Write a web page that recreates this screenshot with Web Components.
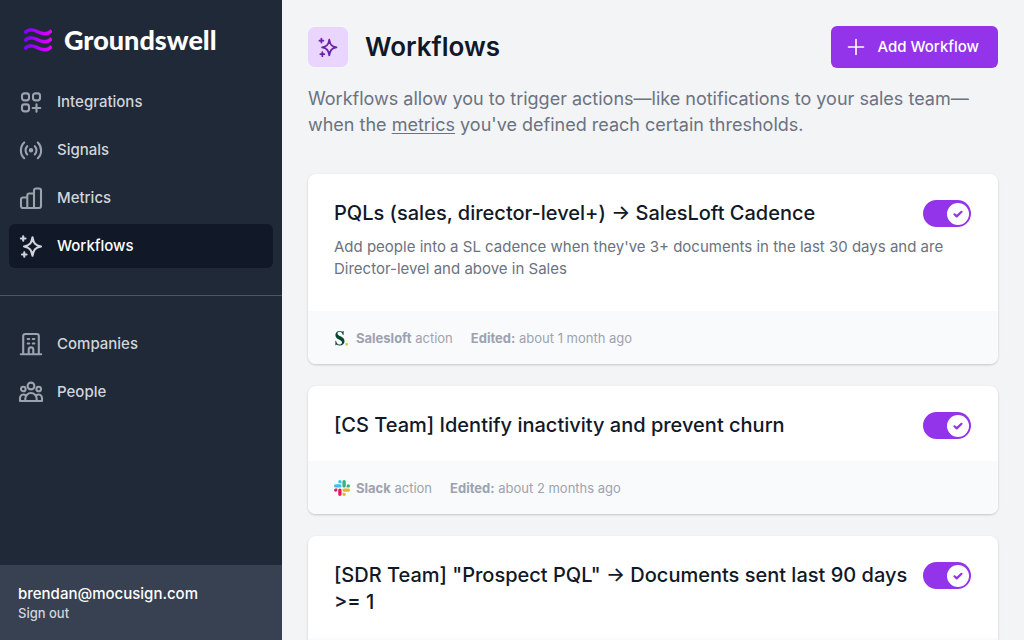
<!DOCTYPE html>
<html lang="en">
<head>
<meta charset="utf-8">
<meta name="viewport" content="width=device-width, initial-scale=1">
<title>Workflows · Groundswell</title>
<style>
  body { margin: 0; font-family: Inter, "Liberation Sans", sans-serif; color: #111827; background: #f3f4f6; }
  page-header p { margin: 0; }
  page-header p a { color: inherit; text-decoration: underline; text-underline-offset: 2px; }
</style>
</head>
<body>
<app-shell>
  <side-bar slot="sidebar">
    <nav-item icon="integrations" href="#integrations">Integrations</nav-item>
    <nav-item icon="signals" href="#signals">Signals</nav-item>
    <nav-item icon="metrics" href="#metrics">Metrics</nav-item>
    <nav-item icon="workflows" href="#workflows" active>Workflows</nav-item>
    <nav-item slot="secondary" icon="companies" href="#companies">Companies</nav-item>
    <nav-item slot="secondary" icon="people" href="#people">People</nav-item>
    <user-panel slot="user" email="brendan@mocusign.com"></user-panel>
  </side-bar>
  <page-header>
    <span slot="title">Workflows</span>
    <span slot="action">Add Workflow</span>
    <p>Workflows allow you to trigger actions—like notifications to your sales team—when the <a href="#metrics">metrics</a> you've defined reach certain thresholds.</p>
  </page-header>
  <workflow-card name="PQLs (sales, director-level+) → SalesLoft Cadence" service="Salesloft" edited="about 1 month ago">Add people into a SL cadence when they've 3+ documents in the last 30 days and are Director-level and above in Sales</workflow-card>
  <workflow-card name="[CS Team] Identify inactivity and prevent churn" service="Slack" edited="about 2 months ago"></workflow-card>
  <workflow-card name="[SDR Team] &quot;Prospect PQL&quot; → Documents sent last 90 days &gt;= 1"></workflow-card>
</app-shell>

<script>
const STAR = `<path d="M14.5 4.2C15.5 10 17 12.5 23 13.5C17 14.5 15.5 17 14.5 22.8C13.5 17 12 14.5 6 13.5C12 12.5 13.5 10 14.5 4.2Z"/><path d="M5.2 3.2V7.8M2.9 5.5H7.5M6.3 19.2V23.8M4 21.5H8.6"/>`;
const ICONS = {
  integrations: `<rect x="4" y="4.4" width="7" height="7" rx="2.4"/><rect x="15" y="4.4" width="7" height="7" rx="2.4"/><rect x="4" y="15.4" width="7" height="7" rx="2.4"/><path d="M18.5 15.2V22.8M14.7 19H22.3"/>`,
  signals: `<path d="M6.2 5.4C1.8 9.6 1.8 17.2 6.2 21.2M19.8 5.4C24.2 9.6 24.2 17.2 19.8 21.2M9.2 9.2C7 11.5 7 15.2 9.2 17.5M16.8 9.2C19 11.5 19 15.2 16.8 17.5"/><circle cx="13" cy="13.3" r="1.2" fill="currentColor"/>`,
  metrics: `<path d="M9.3 23H5A2 2 0 0 1 3 21V14.5A2 2 0 0 1 5 12.5H9.3M16 23H9.3V10.5A2 2 0 0 1 11.3 8.5H16M18 3.5H21A2 2 0 0 1 23 5.5V21A2 2 0 0 1 21 23H16V5.5A2 2 0 0 1 18 3.5Z"/>`,
  workflows: STAR,
  companies: `<path d="M2.8 23.2H23.2M5.2 23V5A2 2 0 0 1 7.2 3H18.8A2 2 0 0 1 20.8 5V23M10.7 23V18.7A2.3 2.3 0 0 1 15.3 18.7V23M9.7 8H11.2M14.8 8H16.3M9.7 12.5H11.2M14.8 12.5H16.3"/>`,
  people: `<circle cx="13" cy="7" r="3.4"/><circle cx="5.3" cy="10" r="2.3"/><circle cx="20.7" cy="10" r="2.3"/><path d="M7.3 22V19.7A5.7 5.7 0 0 1 18.7 19.7V22ZM7.3 22H2V19A3.5 3.5 0 0 1 7.3 16M18.7 22H24V19A3.5 3.5 0 0 0 18.7 16"/>`
};
const icon = name => `<svg viewBox="0 0 26 26" fill="none" stroke="currentColor" stroke-width="2.1" stroke-linecap="round" stroke-linejoin="round" aria-hidden="true">${ICONS[name]}</svg>`;

const SERVICES = {
  Salesloft: `<svg viewBox="0 0 16 16" aria-hidden="true"><path d="M9.6 1V5H9C8.3 2.9 7.2 1.7 5.6 1.7C4.3 1.7 3.5 2.4 3.5 3.4C3.5 4.7 4.7 5.3 6.5 6.3C9 7.6 10.5 8.8 10.5 11.2C10.5 13.7 8.6 15.4 5.7 15.4C4.4 15.4 3.2 15 2.4 14.5L1.9 15.3H1.4V10.7H2C2.6 13.2 3.9 14.6 5.7 14.6C7.1 14.6 8 13.8 8 12.5C8 11.2 6.9 10.5 5 9.5C2.8 8.4 1.4 7.2 1.4 5C1.4 2.6 3.1.9 5.5.9C6.7.9 7.7 1.2 8.6 1.8L9 1Z" fill="#07462f"/><path d="M11.5 13H13.8V15.4H11.5Z" fill="#b9d92c"/></svg>`,
  Slack: `<svg viewBox="0 0 122.8 122.8" aria-hidden="true"><path d="M25.8 77.6a12.9 12.9 0 1 1-12.9-12.9h12.9zM32.3 77.6a12.9 12.9 0 0 1 25.8 0v32.3a12.9 12.9 0 1 1-25.8 0z" fill="#e01e5a"/><path d="M45.2 25.8a12.9 12.9 0 1 1 12.9-12.9v12.9zM45.2 32.3a12.9 12.9 0 0 1 0 25.8H12.9a12.9 12.9 0 1 1 0-25.8z" fill="#36c5f0"/><path d="M97 45.2a12.9 12.9 0 1 1 12.9 12.9H97zM90.5 45.2a12.9 12.9 0 0 1-25.8 0V12.9a12.9 12.9 0 1 1 25.8 0z" fill="#2eb67d"/><path d="M77.6 97a12.9 12.9 0 1 1-12.9 12.9V97zM77.6 90.5a12.9 12.9 0 0 1 0-25.8h32.3a12.9 12.9 0 1 1 0 25.8z" fill="#ecb22e"/></svg>`
};

class BaseElement extends HTMLElement {
  connectedCallback() {
    if (this.shadowRoot) return;
    this.attachShadow({ mode: "open" }).innerHTML = `<style>*{box-sizing:border-box}svg{display:block;flex:none}${this.css()}</style>${this.html()}`;
  }
}

customElements.define("app-shell", class extends BaseElement {
  css() { return `
    :host { display: grid; grid-template-columns: 282px minmax(0, 1fr); height: 100vh; }
    main { overflow-y: auto; scrollbar-width: none; padding: 26px; display: flex; flex-direction: column; gap: 22px; }
    ::slotted(*) { flex: none; }`; }
  html() { return `<slot name="sidebar"></slot><main><slot></slot></main>`; }
});

customElements.define("side-bar", class extends BaseElement {
  css() { return `
    :host { display: flex; flex-direction: column; background: #1f2937; color: #d1d5db; min-height: 0; }
    .brand { display: flex; align-items: center; gap: 12px; padding: 24px 24px 0; height: 56px; color: #fff; font: 900 27px/32px Lato, sans-serif; text-decoration: none; }
    .brand svg { width: 28px; height: 24px; }
    nav { display: flex; flex-direction: column; gap: 4px; padding: 24px 9px 27px; }
    nav + nav { border-top: 1px solid #4b5563; padding-top: 26px; }
    .user { margin-top: auto; }`; }
  html() { return `
    <a class="brand" href="#home">
      <svg viewBox="0 0 28 24" fill="none" stroke="url(#wave)" stroke-width="3.4" aria-hidden="true">
        <defs><linearGradient id="wave" gradientUnits="userSpaceOnUse" x1="0" y1="0" x2="28" y2="0"><stop stop-color="#7a00ff"/><stop offset="1" stop-color="#e800ff"/></linearGradient></defs>
        <path d="M.4 5.2C3 2 7.5.6 12.5 3.2S23.5 7.8 27.6 2.4M.4 13.2C3 10 7.5 8.6 12.5 11.2S23.5 15.8 27.6 10.4M.4 21.2C3 18 7.5 16.6 12.5 19.2S23.5 23.8 27.6 18.4"/>
      </svg>Groundswell</a>
    <nav aria-label="Main"><slot></slot></nav>
    <nav aria-label="Accounts"><slot name="secondary"></slot></nav>
    <div class="user"><slot name="user"></slot></div>`; }
});

customElements.define("nav-item", class extends BaseElement {
  css() { return `
    :host { display: block; }
    a { display: flex; align-items: center; gap: 13px; height: 44px; padding: 0 9px; border-radius: 6px; color: #d1d5db; font-size: 15px; line-height: 22px; font-weight: 500; text-decoration: none; }
    svg { width: 26px; height: 26px; color: #9ca3af; }
    :host([active]) a { background: #111827; color: #fff; }
    :host([active]) svg { color: #d1d5db; }`; }
  html() { return `<a href="${this.getAttribute("href")}"${this.hasAttribute("active") ? ' aria-current="page"' : ""}>${icon(this.getAttribute("icon"))}<slot></slot></a>`; }
});

customElements.define("user-panel", class extends BaseElement {
  css() { return `
    :host { display: block; background: #374151; padding: 18px; font-weight: 500; }
    .email { font-size: 15px; line-height: 21px; color: #fff; }
    a { display: block; font-size: 13px; line-height: 18px; color: #d1d5db; text-decoration: none; }`; }
  html() { return `<div class="email">${this.getAttribute("email")}</div><a href="#sign-out">Sign out</a>`; }
});

customElements.define("page-header", class extends BaseElement {
  css() { return `
    :host { display: block; margin-bottom: 14px; }
    .top { display: flex; align-items: center; }
    .badge { display: grid; place-items: center; width: 40px; height: 40px; border-radius: 7px; background: #e9d5ff; color: #6b21a8; margin-right: 17px; }
    .badge svg { width: 22px; height: 22px; }
    h1 { flex: 1; margin: 0; font-size: 26px; line-height: 36px; font-weight: 600; }
    button { display: flex; align-items: center; gap: 10px; height: 42px; padding: 0 19px 0 14px; border: 0; border-radius: 6px; background: #9333ea; color: #fff; font: 500 15px/22px Inter, sans-serif; }
    button svg { width: 22px; height: 22px; }
    .intro { margin-top: 18px; font-size: 18px; line-height: 26px; color: #6b7280; }`; }
  html() { return `
    <div class="top"><span class="badge">${icon("workflows")}</span><h1><slot name="title"></slot></h1>
      <button type="button"><svg viewBox="0 0 22 22" fill="none" stroke="currentColor" stroke-width="1.6" stroke-linecap="round" aria-hidden="true"><path d="M11 3.5V18.5M3.5 11H18.5"/></svg><slot name="action"></slot></button></div>
    <div class="intro"><slot></slot></div>`; }
});

customElements.define("toggle-switch", class extends BaseElement {
  css() { return `
    :host { display: block; flex: none; }
    label { display: grid; align-items: center; width: 48px; height: 27px; }
    input { grid-area: 1 / 1; appearance: none; margin: 0; width: 48px; height: 27px; border-radius: 14px; background: #d1d5db; }
    input:checked { background: #9333ea; }
    .knob { grid-area: 1 / 1; display: grid; place-items: center; width: 22px; height: 22px; margin-left: 2px; border-radius: 50%; background: #fff; color: #9333ea; pointer-events: none; }
    input:checked + .knob { margin-left: 24px; }
    input:not(:checked) + .knob svg { visibility: hidden; }
    svg { width: 12px; height: 12px; }`; }
  html() { return `<label><input type="checkbox" role="switch" aria-label="Enabled" checked><span class="knob"><svg viewBox="0 0 12 12" fill="none" stroke="currentColor" stroke-width="2.2" stroke-linecap="round" stroke-linejoin="round" aria-hidden="true"><path d="M2.5 6.3L4.7 8.4L9.5 3.8"/></svg></span></label>`; }
});

customElements.define("workflow-card", class extends BaseElement {
  css() { return `
    :host { display: block; border-radius: 8px; overflow: hidden; background: #fff; box-shadow: 0 1px 3px rgba(0,0,0,.1), 0 1px 2px rgba(0,0,0,.1); }
    .body { padding: 26px 27px 22px 26px; }
    .row { display: flex; gap: 13px; }
    h2 { flex: 1; margin: 0; font-size: 20px; line-height: 27px; font-weight: 500; }
    p { margin: 9px 0; font-size: 15px; line-height: 22px; color: #6b7280; }
    footer { display: flex; align-items: center; gap: 18px; min-height: 53px; padding: 0 26px; background: #f9fafb; color: #9ca3af; font-size: 13px; line-height: 18px; }
    .service { display: flex; align-items: center; gap: 6px; }
    svg { width: 16px; height: 16px; }
    b { font-weight: 700; }`; }
  html() {
    const esc = s => s.replace(/&/g, "&amp;").replace(/</g, "&lt;").replace(/>/g, "&gt;");
    const service = this.getAttribute("service");
    return `
    <article><div class="body"><div class="row"><h2>${esc(this.getAttribute("name"))}</h2><toggle-switch></toggle-switch></div>
      ${this.textContent.trim() ? "<p><slot></slot></p>" : ""}</div>
      <footer>${service ? `<span class="service">${SERVICES[service]}<span><b>${service}</b> action</span></span><span><b>Edited:</b> ${this.getAttribute("edited")}</span>` : ""}</footer></article>`; }
});
</script>
</body>
</html>
